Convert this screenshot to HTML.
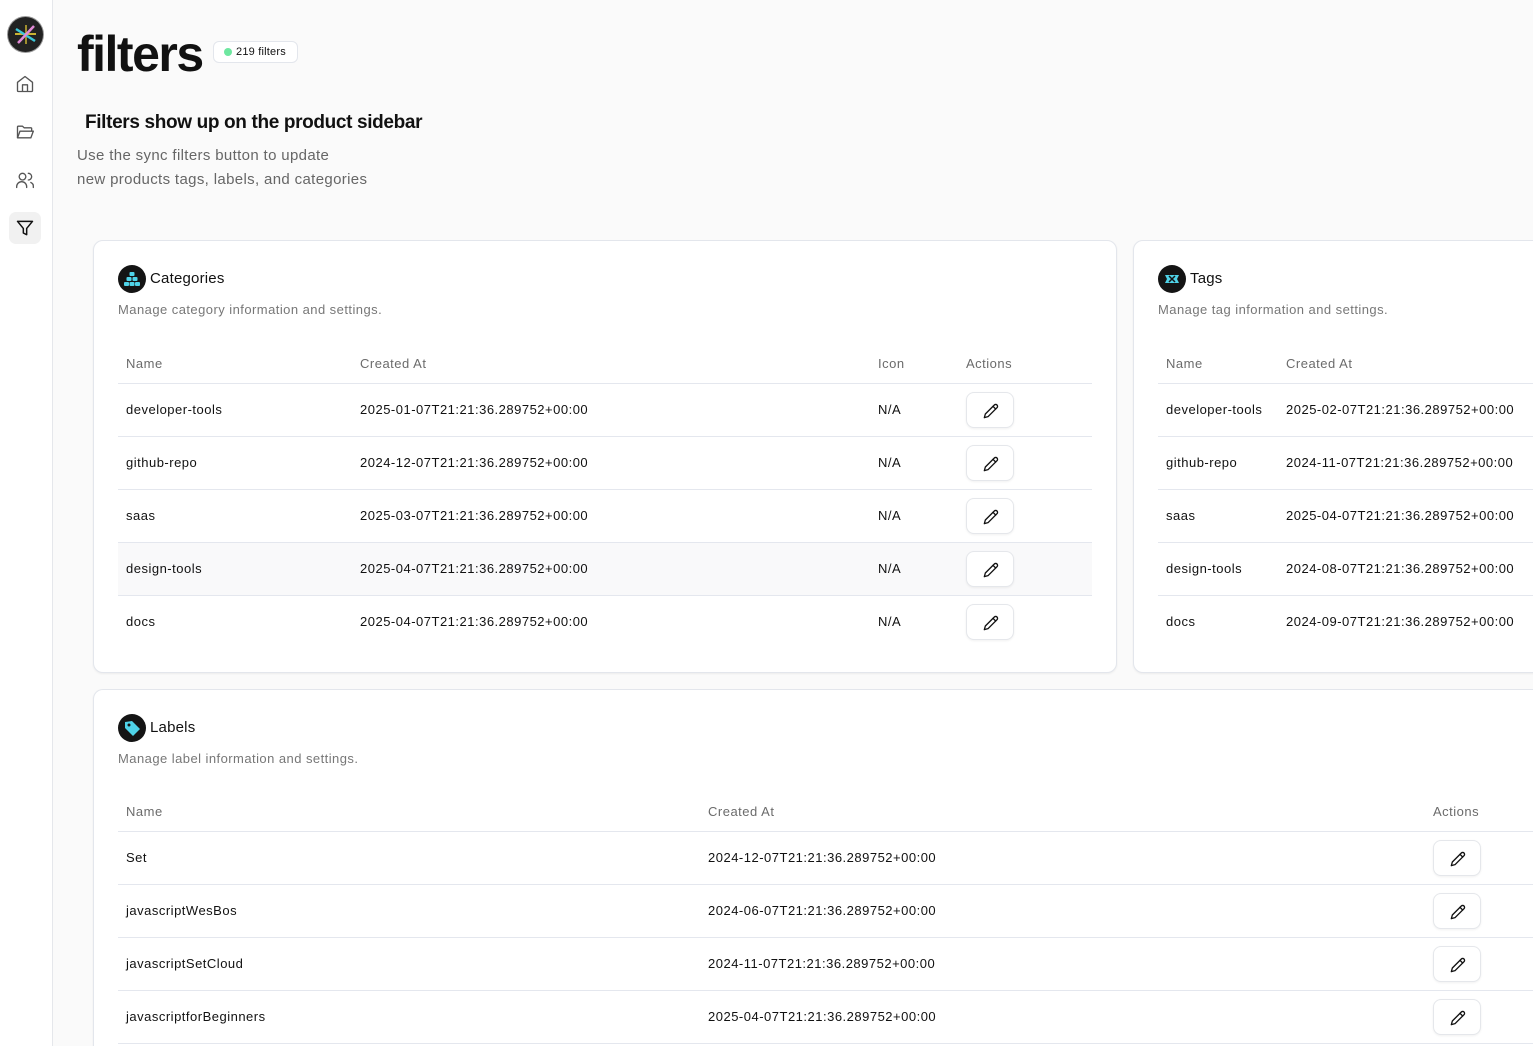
<!DOCTYPE html>
<html style="overflow:hidden"><head><meta charset="utf-8"><style>
*{box-sizing:border-box;margin:0;padding:0}
html,body{width:1533px;height:1046px;overflow:hidden}
body{background:#fafafa;font-family:"Liberation Sans",sans-serif;color:#111;position:relative}
.side{position:absolute;left:0;top:0;width:53px;height:1046px;background:#fff;border-right:1px solid #e5e7eb}
.a{position:absolute;white-space:nowrap}
.card{position:absolute;background:#fff;border:1px solid #e3e6ec;border-radius:10px;box-shadow:0 1px 2px rgba(0,0,0,.06)}
.ic{position:absolute;width:28px;height:28px;border-radius:50%;background:#141414}
.t{font-size:15px;color:#111;letter-spacing:0.2px}
.d{font-size:13px;color:#777;letter-spacing:0.45px}
.h{font-size:13px;color:#6b6b6b;letter-spacing:0.5px}
.c{font-size:13px;color:#111;letter-spacing:0.5px}
.line{position:absolute;height:1px;background:#e4e7ee}
.btn{position:absolute;width:48px;height:36px;border:1px solid #e5e7eb;border-radius:8px;background:#fff;box-shadow:0 1px 2px rgba(0,0,0,.06)}
.btn svg{position:absolute;left:16px;top:10px}
</style></head><body>
<div class="side">
 <div class="a" style="left:8px;top:17px;width:35px;height:35px;border-radius:50%;background:#222;box-shadow:0 0 0 1px #999;overflow:hidden">
  <svg width="35" height="35" viewBox="0 0 35 35"><line x1="7" y1="17" x2="28" y2="17" stroke="#c9b232" stroke-width="2"/><line x1="18" y1="8" x2="18" y2="27" stroke="#c9b232" stroke-width="1.5"/><line x1="8" y1="12" x2="27" y2="24" stroke="#3cc7d8" stroke-width="2.5"/><line x1="10" y1="26" x2="26" y2="9" stroke="#e28ad6" stroke-width="2.5"/></svg>
 </div>
 <svg class="a" style="left:15px;top:74px" width="20" height="20" viewBox="0 0 24 24" fill="none" stroke="#555" stroke-width="1.6" stroke-linejoin="round"><path d="M3 10l9-7 9 7v10a1 1 0 0 1-1 1H4a1 1 0 0 1-1-1z"/><path d="M9 21v-8h6v8"/></svg>
 <svg class="a" style="left:15px;top:122px" width="20" height="20" viewBox="0 0 24 24" fill="none" stroke="#555" stroke-width="1.6" stroke-linejoin="round"><path d="M3 19V6a1 1 0 0 1 1-1h5l2 2h8a1 1 0 0 1 1 1v3"/><path d="M3 19l3-8h16l-3 8z"/></svg>
 <svg class="a" style="left:15px;top:170px" width="20" height="20" viewBox="0 0 24 24" fill="none" stroke="#555" stroke-width="1.6" stroke-linecap="round"><circle cx="9" cy="8" r="4"/><path d="M2 21v-1a6 6 0 0 1 12 0v1"/><path d="M16 4a4 4 0 0 1 0 8M19 15a5 5 0 0 1 3 5v1"/></svg>
 <div class="a" style="left:9px;top:212px;width:32px;height:32px;border-radius:7px;background:#f1f1f1"></div>
 <svg class="a" style="left:15px;top:218px" width="20" height="20" viewBox="0 0 24 24" fill="none" stroke="#111" stroke-width="1.8" stroke-linejoin="round"><path d="M3 4h18l-7 8.5V20l-4-2v-5.5z"/></svg>
</div>

<div class="a" style="left:77px;top:24px;font-size:50px;font-weight:bold;letter-spacing:-1.5px;line-height:60px">filters</div>
<div class="a" style="left:213px;top:41px;width:85px;height:22px;border:1px solid #e3e6ec;border-radius:6px;background:#fff;font-size:11px;line-height:20px;padding-left:22px;letter-spacing:0.2px">219 filters</div>
<div class="a" style="left:224px;top:48px;width:8px;height:8px;border-radius:50%;background:#6ee7a0"></div>

<div class="a" style="left:85px;top:111px;font-size:19px;font-weight:bold;line-height:24px;letter-spacing:-0.35px">Filters show up on the product sidebar</div>
<div class="a" style="left:77px;top:144px;font-size:15px;color:#666;line-height:24px;letter-spacing:0.35px">Use the sync filters button to update<br>new products tags, labels, and categories</div>

<!-- Categories -->
<div class="card" style="left:93px;top:240px;width:1024px;height:433px"></div>
<div class="ic" style="left:118px;top:265px"><svg width="28" height="28" viewBox="0 0 28 28" fill="#4fd3e8"><rect x="11.5" y="7" width="5" height="4" rx="1"/><rect x="8.5" y="12" width="5" height="4" rx="1"/><rect x="14.5" y="12" width="5" height="4" rx="1"/><rect x="6" y="17" width="5" height="4" rx="1"/><rect x="11.5" y="17" width="5" height="4" rx="1"/><rect x="17" y="17" width="5" height="4" rx="1"/></svg></div>
<div class="a t" style="left:150px;top:270px">Categories</div>
<div class="a d" style="left:118px;top:302px">Manage category information and settings.</div>
<div class="a h" style="left:126px;top:356px">Name</div>
<div class="a h" style="left:360px;top:356px">Created At</div>
<div class="a h" style="left:878px;top:356px">Icon</div>
<div class="a h" style="left:966px;top:356px">Actions</div>
<div class="line" style="left:118px;top:383px;width:974px"></div>
<div class="a" style="left:118px;top:543px;width:974px;height:52px;background:#f9f9fa"></div>
<div class="line" style="left:118px;top:436px;width:974px"></div>
<div class="line" style="left:118px;top:489px;width:974px"></div>
<div class="line" style="left:118px;top:542px;width:974px"></div>
<div class="line" style="left:118px;top:595px;width:974px"></div>

<!-- Tags -->
<div class="card" style="left:1133px;top:240px;width:420px;height:433px"></div>
<div class="ic" style="left:1158px;top:265px"><svg width="28" height="28" viewBox="0 0 28 28"><path d="M7 10h14l-2 4 2 4H7l2-4z" fill="#4fd3e8"/><path d="M11 11l6 6M17 11l-6 6" stroke="#141414" stroke-width="1.5"/></svg></div>
<div class="a t" style="left:1190px;top:270px">Tags</div>
<div class="a d" style="left:1158px;top:302px">Manage tag information and settings.</div>
<div class="a h" style="left:1166px;top:356px">Name</div>
<div class="a h" style="left:1286px;top:356px">Created At</div>
<div class="line" style="left:1158px;top:383px;width:380px"></div>
<div class="line" style="left:1158px;top:436px;width:380px"></div>
<div class="line" style="left:1158px;top:489px;width:380px"></div>
<div class="line" style="left:1158px;top:542px;width:380px"></div>
<div class="line" style="left:1158px;top:595px;width:380px"></div>

<!-- Labels -->
<div class="card" style="left:93px;top:689px;width:1460px;height:357px;border-bottom:none;border-radius:10px 10px 0 0"></div>
<div class="ic" style="left:118px;top:714px"><svg width="28" height="28" viewBox="0 0 28 28"><path d="M7 8l7-1 8 8-7 7-8-8z" fill="#4fd3e8"/><circle cx="11" cy="11" r="1.5" fill="#141414"/></svg></div>
<div class="a t" style="left:150px;top:719px">Labels</div>
<div class="a d" style="left:118px;top:751px">Manage label information and settings.</div>
<div class="a h" style="left:126px;top:804px">Name</div>
<div class="a h" style="left:708px;top:804px">Created At</div>
<div class="a h" style="left:1433px;top:804px">Actions</div>
<div class="line" style="left:118px;top:831px;width:1420px"></div>
<div class="line" style="left:118px;top:884px;width:1420px"></div>
<div class="line" style="left:118px;top:937px;width:1420px"></div>
<div class="line" style="left:118px;top:990px;width:1420px"></div>
<div class="line" style="left:118px;top:1043px;width:1420px"></div>

<div id="rows"></div>
<script>
var pen='<svg width="16" height="16" viewBox="0 0 24 24" fill="none" stroke="#111" stroke-width="2" stroke-linecap="round" stroke-linejoin="round"><path d="M17 3a2.8 2.8 0 0 1 4 4L7.5 20.5 2 22l1.5-5.5z"/><path d="M15 5l4 4"/></svg>';
var h='';
function cell(x,y,t){h+='<div class="a c" style="left:'+x+'px;top:'+(y-8)+'px">'+t+'</div>';}
function btn(x,y){h+='<div class="btn" style="left:'+x+'px;top:'+(y-18)+'px">'+pen+'</div>';}
var cn=['developer-tools','github-repo','saas','design-tools','docs'];
var cd=['2025-01','2024-12','2025-03','2025-04','2025-04'];
var td=['2025-02','2024-11','2025-04','2024-08','2024-09'];
var s='-07T21:21:36.289752+00:00';
for(var i=0;i<5;i++){var y=410+53*i;cell(126,y,cn[i]);cell(360,y,cd[i]+s);cell(878,y,'N/A');btn(966,y);cell(1166,y,cn[i]);cell(1286,y,td[i]+s);}
var ln=['Set','javascriptWesBos','javascriptSetCloud','javascriptforBeginners'];
var ld=['2024-12','2024-06','2024-11','2025-04'];
for(var i=0;i<4;i++){var y=858+53*i;cell(126,y,ln[i]);cell(708,y,ld[i]+s);btn(1433,y);}
document.getElementById('rows').innerHTML=h;
</script>
</body></html>
